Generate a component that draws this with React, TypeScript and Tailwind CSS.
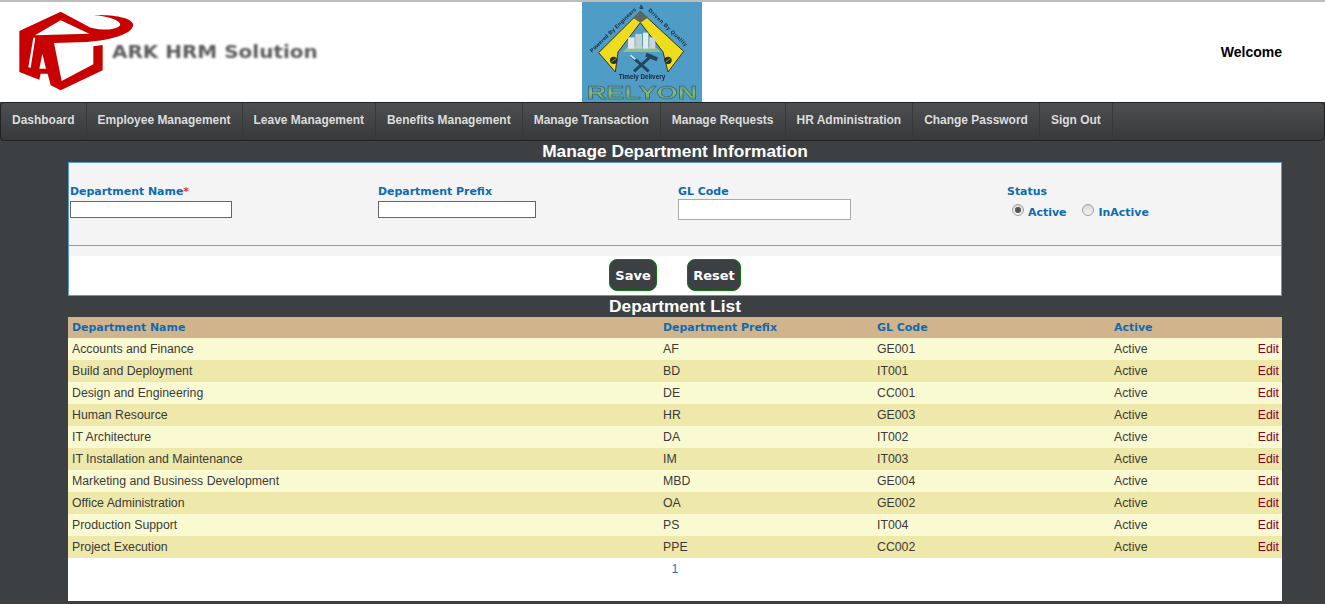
import React from 'react'

const navItems = ['Dashboard', 'Employee Management', 'Leave Management', 'Benefits Management', 'Manage Transaction', 'Manage Requests', 'HR Administration', 'Change Password', 'Sign Out']

const departments = [
    ['Accounts and Finance', 'AF', 'GE001'],
    ['Build and Deployment', 'BD', 'IT001'],
    ['Design and Engineering', 'DE', 'CC001'],
    ['Human Resource', 'HR', 'GE003'],
    ['IT Architecture', 'DA', 'IT002'],
    ['IT Installation and Maintenance', 'IM', 'IT003'],
    ['Marketing and Business Development', 'MBD', 'GE004'],
    ['Office Administration', 'OA', 'GE002'],
    ['Production Support', 'PS', 'IT004'],
    ['Project Execution', 'PPE', 'CC002'],
]

const rowGrid = 'grid grid-cols-[591px_214px_237px_1fr]'
const label = "font-['DejaVu_Sans'] text-[10.95px] font-bold text-[#0e6bb0] leading-[14px]"

const ArkLogo = () => (
    <svg width="130" height="90" viewBox="0 0 390 270" className="shrink-0 blur-[0.4px]">
        <path d="M152 14 L28 72 L28 195 L88 218 L92 200 L113 200 L122 235 L152 250 L278 190 L278 114 L250 118 L250 172 L155 222 L132 108 L230 105 C310 100 375 78 369 50 C362 30 300 22 250 24 C300 28 335 42 330 55 C322 68 285 72 242 62 Z" fill="#c80000" />
        <path d="M152 40 L75 85 L238 80 Z" fill="#fff" />
        <path d="M70 92 L55 180 L62 183 L76 92 Z" fill="#fff" />
        <path d="M97 140 L88 185 L108 185 Z" fill="#fff" />
    </svg>
)

const RelyonLogo = () => (
    <svg width="120" height="100" viewBox="0 0 360 300" className="shrink-0 bg-[#4f9cc6] blur-[0.3px]">
        <defs>
            <path id="arcLeft" d="M30 152 L165 22" />
            <path id="arcRight" d="M198 26 L318 142" />
            <linearGradient id="relyonFill" x1="0" y1="0" x2="0" y2="1">
                <stop offset="0" stopColor="#3f78a8" />
                <stop offset="0.5" stopColor="#8fbf68" />
                <stop offset="1" stopColor="#4d8f70" />
            </linearGradient>
        </defs>
        <path d="M175 28 L305 148 L258 210 L243 150 L175 62 L108 150 L100 210 L50 152 Z" fill="#f0dc1e" stroke="#333322" strokeWidth="3" />
        <path d="M175 28 L196 48 L175 62 L154 48 Z" fill="#5d6660" />
        <circle cx="95" cy="175" r="11" fill="#26301f" />
        <path d="M88 180 L102 170" stroke="#f0dc1e" strokeWidth="2" />
        <circle cx="258" cy="175" r="11" fill="#26301f" />
        <path d="M251 180 L265 170" stroke="#f0dc1e" strokeWidth="2" />
        <path d="M122 150 L138 134 L218 134 L238 150 Z" fill="#8fc08c" />
        <rect x="138" y="106" width="20" height="34" fill="#dfe7e4" />
        <rect x="160" y="96" width="20" height="44" fill="#c2d0d2" />
        <rect x="183" y="92" width="16" height="48" fill="#e4ebe8" />
        <rect x="202" y="106" width="18" height="34" fill="#cad6d6" />
        <path d="M148 162 L200 208 M208 162 L156 208" stroke="#22455f" strokeWidth="9" />
        <path d="M192 158 L226 172" stroke="#22455f" strokeWidth="12" />
        <path d="M146 160 L160 172" stroke="#d6e4ea" strokeWidth="6" />
        <text fontFamily="Liberation Sans" fontSize="16" fontWeight="700" fill="#14233a" letterSpacing="0.6">
            <textPath href="#arcLeft">Powered By Engineers</textPath>
        </text>
        <text x="172" y="22" fontFamily="Liberation Sans" fontSize="18" fontWeight="700" fill="#14233a">&amp;</text>
        <text fontFamily="Liberation Sans" fontSize="16" fontWeight="700" fill="#14233a" letterSpacing="1.4">
            <textPath href="#arcRight">Driven By Quality</textPath>
        </text>
        <text x="180" y="231" textAnchor="middle" fontFamily="Liberation Sans" fontSize="19" fontWeight="700" fill="#14233a">Timely Delivery</text>
        <text x="180" y="290" textAnchor="middle" fontFamily="Liberation Sans" fontSize="56" fontWeight="700" textLength="332" lengthAdjust="spacingAndGlyphs" fill="url(#relyonFill)" stroke="#2c5f78" strokeWidth="1.5">RELYON</text>
    </svg>
)

const Radio = ({ checked }: { checked?: boolean }) => (
    <span className="flex h-3 w-3 items-center justify-center rounded-full border border-[#a0a0a0] bg-gradient-to-b from-[#d8d8d8] to-[#f4f4f4]">
        {checked && <span className="h-1.5 w-1.5 rounded-full bg-[#555]" />}
    </span>
)

export default function App() {
    return (
        <div className="min-h-[604px] bg-[#3c4043] font-['Liberation_Sans',sans-serif]">
            <header className="flex h-[102px] items-center border-t-2 border-[#bdbdbd] bg-white">
                <div className="flex w-[582px] items-center pl-[10px]">
                    <ArkLogo />
                    <span className="-ml-[28px] mt-[2px] origin-left scale-x-[1.175] font-['DejaVu_Sans'] text-[17px] font-bold text-[#5c5c5c] blur-[1px]">ARK HRM Solution</span>
                </div>
                <RelyonLogo />
                <div className="flex-1 pr-[43px] text-right text-[14px] font-bold text-black">Welcome</div>
            </header>

            <nav className="flex h-[39px] rounded-[4px] border border-[#222] bg-gradient-to-b from-[#4d4f50] to-[#37393b]">
                {navItems.map((item) => (
                    <a key={item} className="flex items-center border-r border-[#363839] px-[11px] pb-[1px] text-[11.97px] font-bold text-[#dcdcdc]">{item}</a>
                ))}
            </nav>

            <main className="ml-[68px] mr-[43px]">
                <h1 className="h-[21px] text-center text-[17.33px] leading-[21px] font-bold text-white">Manage Department Information</h1>

                <section className="h-[134px] border border-[#5b9bd5] bg-white">
                    <div className="h-[93px] bg-[#f4f4f4]">
                        <div className="flex h-[83px] border-b border-[#999] pl-[1px] pt-[22px]">
                            <div className="w-[308px]">
                                <div className={label}>Department Name<span className="text-[#f03020]">*</span></div>
                                <input className="mt-[2px] block h-[17px] w-[162px] border border-[#666] bg-white" />
                            </div>
                            <div className="w-[300px]">
                                <div className={label}>Department Prefix</div>
                                <input className="mt-[2px] block h-[17px] w-[158px] border border-[#666] bg-white" />
                            </div>
                            <div className="w-[329px]">
                                <div className={label}>GL Code</div>
                                <input className="block h-[21px] w-[173px] border border-[#aaa] bg-white" />
                            </div>
                            <div>
                                <div className={label}>Status</div>
                                <div className={`${label} mt-[5px] flex items-start pl-[5px]`}>
                                    <Radio checked />
                                    <span className="ml-[4px] mt-[2px]">Active</span>
                                    <span className="ml-[16px]"><Radio /></span>
                                    <span className="ml-[4px] mt-[2px]">InActive</span>
                                </div>
                            </div>
                        </div>
                    </div>
                    <div className="flex justify-center gap-[30px] pt-[3px] font-['DejaVu_Sans'] text-[13px] font-bold text-white">
                        <button className="h-[32px] w-[48px] rounded-[8px] border border-[#0a7a0a] bg-[#3c4043] pt-[1px]">Save</button>
                        <button className="h-[32px] w-[54px] rounded-[8px] border border-[#0a7a0a] bg-[#3c4043] pt-[1px]">Reset</button>
                    </div>
                </section>

                <h2 className="h-[21px] text-center text-[17.33px] leading-[21px] font-bold text-white">Department List</h2>

                <div className={`${rowGrid} h-[21px] items-center bg-[#d2b48c] pl-[4px] pt-[1px] ${label}`}>
                    <span>Department Name</span>
                    <span>Department Prefix</span>
                    <span>GL Code</span>
                    <span>Active</span>
                </div>
                {departments.map(([name, prefix, code], idx) => (
                    <div key={code} className={`${rowGrid} h-[22px] items-center pl-[4px] pr-[3px] text-[12.3px] text-[#3a3a3a] ${idx % 2 === 0 ? 'bg-[#fafad2]' : 'bg-[#eee8aa]'}`}>
                        <span>{name}</span>
                        <span>{prefix}</span>
                        <span>{code}</span>
                        <span className="flex justify-between">Active<a className="text-[#8a0020]">Edit</a></span>
                    </div>
                ))}
                <div className="h-[43px] bg-white pt-[2px] text-center text-[12.3px] text-[#1a7ac0]">1</div>
            </main>
        </div>
    )
}
